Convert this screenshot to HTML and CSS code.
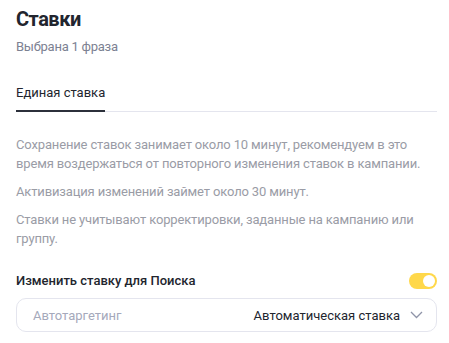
FILE: index.html
```html
<!DOCTYPE html>
<html lang="ru">
<head>
    <meta charset="UTF-8">
    <meta name="viewport" content="width=device-width, initial-scale=1.0">
    <title>Ставки</title>
    <link rel="stylesheet" href="styles.css">
</head>
<body>
    <div class="panel">
        <h1 class="title">Ставки</h1>
        <p class="subtitle">Выбрана 1 фраза</p>

        <div class="tabs">
            <span class="tab active">Единая ставка</span>
        </div>

        <div class="notes">
            <p>Сохранение ставок занимает около 10 минут, рекомендуем в это время воздержаться от повторного изменения ставок в кампании.</p>
            <p>Активизация изменений займет около 30 минут.</p>
            <p>Ставки не учитывают корректировки, заданные на кампанию или группу.</p>
        </div>

        <div class="field-head">
            <span class="field-label">Изменить ставку для Поиска</span>
            <span class="switch on"><span class="knob"></span></span>
        </div>

        <div class="select">
            <span class="select-placeholder">Автотаргетинг</span>
            <span class="select-value">Автоматическая ставка</span>
            <svg class="chevron" width="13" height="8" viewBox="0 0 13 8">
                <path d="M1 1l5.5 5.5 5.5-5.5" fill="none" stroke="#8f94a8" stroke-width="1.3"/>
            </svg>
        </div>
    </div>
</body>
</html>
```

FILE: styles.css
```css
body {
    margin: 0;
    background: #fff;
    font-family: Roboto, "Noto Sans", sans-serif;
    color: #22252e;
}

.panel {
    width: 421px;
    padding: 6px 12px 0 16px;
}

.title {
    margin: 0;
    font-size: 20px;
    line-height: 26px;
    font-weight: 700;
    letter-spacing: -0.5px;
}

.subtitle {
    margin: 6px 0 0;
    font-size: 13px;
    line-height: 18px;
    letter-spacing: -0.25px;
    color: #7c8192;
}

.tabs {
    margin-top: 28px;
    border-bottom: 1px solid #e4e5ee;
    display: flex;
}

.tab {
    font-size: 13px;
    line-height: 18px;
    padding-bottom: 9px;
}

.tab.active {
    box-shadow: inset 0 -2px 0 #2c303b;
    margin-bottom: -1px;
    padding-bottom: 10px;
}

.notes {
    margin-top: 23px;
}

.notes p {
    margin: 0 0 9px;
    font-size: 13px;
    line-height: 19px;
    letter-spacing: -0.15px;
    color: #9a9ca6;
}

.field-head {
    margin-top: 24px;
    display: flex;
    align-items: center;
    justify-content: space-between;
}

.field-label {
    font-size: 13px;
    line-height: 18px;
    font-weight: 500;
}

.switch {
    width: 28px;
    height: 16px;
    border-radius: 8px;
    background: #ffd84a;
    display: flex;
    align-items: center;
    padding: 0 2px;
    box-sizing: border-box;
}

.switch.on {
    justify-content: flex-end;
}

.knob {
    width: 12px;
    height: 12px;
    border-radius: 50%;
    background: #fff;
}

.select {
    margin-top: 8px;
    height: 34px;
    border: 1px solid #e4e5ee;
    border-radius: 10px;
    box-sizing: border-box;
    display: flex;
    align-items: center;
    padding: 0 13px 0 16px;
    font-size: 13px;
}

.select-placeholder {
    color: #a5a9bb;
    flex: 1;
}

.select-value {
    color: #22252e;
}

.chevron {
    margin-left: 10px;
}
```
